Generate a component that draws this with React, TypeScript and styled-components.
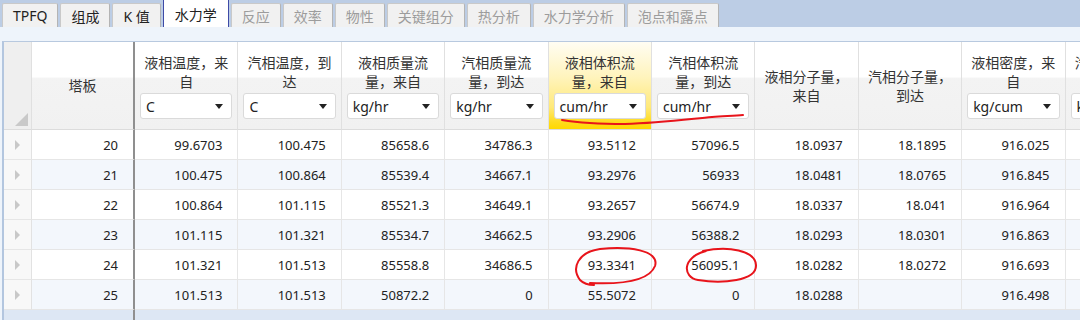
import React from 'react'
import styled, { createGlobalStyle, css } from 'styled-components'

const GlobalStyle = createGlobalStyle`
  body {
    margin: 0;
    background: #eef4fb;
    font-family: "Noto Sans", "Noto Sans CJK SC", sans-serif;
  }
`

const COLS = '28px 103px repeat(10, 103.4px)'

const Page = styled.div`
  position: relative;
  width: 1080px;
  height: 320px;
  overflow: hidden;
  display: flex;
  flex-direction: column;
  background: #eef4fb;
`

const TabBar = styled.div`
  display: flex;
  align-items: flex-end;
  height: 27px;
  padding-left: 2px;
  background: #bccde5;
`

const Tab = styled.div<{ $active?: boolean; $disabled?: boolean }>`
  display: flex;
  align-items: center;
  height: 24px;
  padding: 0 10px;
  margin-right: 2px;
  box-sizing: border-box;
  background: #f1f1f1;
  border: 1px solid #c9c9c9;
  border-right-color: #b4b4b4;
  border-bottom: none;
  border-radius: 2px 2px 0 0;
  font-size: 14px;
  color: ${p => (p.$disabled ? '#9c9c9c' : '#222')};
  ${p =>
    p.$active &&
    css`
      height: 27px;
      padding: 0 11px;
      background: #fff;
      border: none;
      border-left: 1px solid #3e4aa6;
      border-right: 1px solid #3e4aa6;
      border-radius: 0;
    `}
`

const Band = styled.div`
  height: 14px;
  background: #eef4fb;
`

const GridWrap = styled.div`
  flex: 1;
  margin-left: 2px;
  border-left: 2px solid #b3c6df;
  border-top: 1px solid #b8c9df;
  background: #dde7f4;
  overflow: hidden;
  display: flex;
  flex-direction: column;
`

const Row = styled.div<{ $alt?: boolean }>`
  display: grid;
  grid-template-columns: ${COLS};
  height: 30px;
  background: ${p => (p.$alt ? '#f3f7fc' : '#fff')};
`

const HeadRow = styled.div`
  display: grid;
  grid-template-columns: ${COLS};
  height: 88px;
`

const Corner = styled.div`
  display: flex;
  align-items: flex-end;
  justify-content: flex-end;
  padding: 0 3px 3px 0;
  background: #efefef;
  border-right: 1px solid #e0e0e0;
  border-bottom: 1px solid #dcdcdc;
  box-sizing: border-box;
`

const CornerMark = styled.div`
  width: 0;
  height: 0;
  border-left: 13px solid transparent;
  border-bottom: 13px solid #c9c9c9;
`

const HeadCell = styled.div<{ $frozen?: boolean; $hot?: boolean; $center?: boolean }>`
  display: flex;
  flex-direction: column;
  align-items: stretch;
  justify-content: ${p => (p.$center ? 'center' : 'flex-start')};
  padding: ${p => (p.$center ? '0 5px' : '11px 5px 0')};
  box-sizing: border-box;
  min-width: 0;
  background: linear-gradient(#ffffff 0%, #ffffff 40%, #f3f3f3 42%, #f1f1f1 100%);
  border-right: 1px solid #e0e0e0;
  border-bottom: 1px solid #dcdcdc;
  font-size: 14px;
  line-height: 19px;
  color: #333;
  text-align: center;
  ${p =>
    p.$frozen &&
    css`
      border-right: 2px solid #8f8f8f;
    `}
  ${p =>
    p.$hot &&
    css`
      background: linear-gradient(#fffdf3 0%, #fff4bd 40%, #ffe97a 75%, #ffdc1e 92%, #ffd800 100%);
    `}
`

const HeadText = styled.div`
  height: 38px;
`

const UnitBox = styled.div`
  display: flex;
  align-items: center;
  justify-content: space-between;
  height: 26px;
  margin-top: 2px;
  padding: 0 8px 0 5px;
  box-sizing: border-box;
  background: #fff;
  border: 1px solid #dadada;
  border-radius: 3px;
  font-size: 14px;
  color: #222;
  text-align: left;
`

const Caret = styled.span`
  width: 0;
  height: 0;
  border-left: 4px solid transparent;
  border-right: 4px solid transparent;
  border-top: 5px solid #222;
`

const RowHead = styled.div`
  display: flex;
  align-items: center;
  padding-left: 11px;
  background: #f8f8f8;
  border-right: 1px solid #e2e2e2;
  border-bottom: 1px solid #e6e6e6;
  box-sizing: border-box;
`

const RowMark = styled.div`
  width: 0;
  height: 0;
  border-top: 5px solid transparent;
  border-bottom: 5px solid transparent;
  border-left: 5px solid #c8c8c8;
`

const Cell = styled.div<{ $frozen?: boolean }>`
  display: flex;
  align-items: center;
  justify-content: flex-end;
  padding-right: 15px;
  box-sizing: border-box;
  min-width: 0;
  white-space: nowrap;
  border-right: ${p => (p.$frozen ? '2px solid #8f8f8f' : '1px solid #e6e6e6')};
  border-bottom: 1px solid #e6e6e6;
  font-size: 13px;
  color: #222;
`

const Footer = styled.div`
  display: grid;
  grid-template-columns: ${COLS};
  flex: 1;
`

const FooterCell = styled.div<{ $frozen?: boolean }>`
  border-right: ${p => (p.$frozen ? '2px solid #8f8f8f' : 'none')};
`

const Ink = styled.svg`
  position: absolute;
  left: 0;
  top: 0;
  pointer-events: none;
`

type Col = { title: string; unit?: string; hot?: boolean }

const columns: Col[] = [
  { title: '液相温度，来自', unit: 'C' },
  { title: '汽相温度，到达', unit: 'C' },
  { title: '液相质量流量，来自', unit: 'kg/hr' },
  { title: '汽相质量流量，到达', unit: 'kg/hr' },
  { title: '液相体积流量，来自', unit: 'cum/hr', hot: true },
  { title: '汽相体积流量，到达', unit: 'cum/hr' },
  { title: '液相分子量，来自' },
  { title: '汽相分子量，到达' },
  { title: '液相密度，来自', unit: 'kg/cum' },
  { title: '汽相密度，到达', unit: 'kg/cum' },
]

const rows: string[][] = [
  ['20', '99.6703', '100.475', '85658.6', '34786.3', '93.5112', '57096.5', '18.0937', '18.1895', '916.025', ''],
  ['21', '100.475', '100.864', '85539.4', '34667.1', '93.2976', '56933', '18.0481', '18.0765', '916.845', ''],
  ['22', '100.864', '101.115', '85521.3', '34649.1', '93.2657', '56674.9', '18.0337', '18.041', '916.964', ''],
  ['23', '101.115', '101.321', '85534.7', '34662.5', '93.2906', '56388.2', '18.0293', '18.0301', '916.863', ''],
  ['24', '101.321', '101.513', '85558.8', '34686.5', '93.3341', '56095.1', '18.0282', '18.0272', '916.693', ''],
  ['25', '101.513', '101.513', '50872.2', '0', '55.5072', '0', '18.0288', '', '916.498', ''],
]

const tabs = [
  { label: 'TPFQ' },
  { label: '组成' },
  { label: 'K 值' },
  { label: '水力学', active: true },
  { label: '反应', disabled: true },
  { label: '效率', disabled: true },
  { label: '物性', disabled: true },
  { label: '关键组分', disabled: true },
  { label: '热分析', disabled: true },
  { label: '水力学分析', disabled: true },
  { label: '泡点和露点', disabled: true },
]

export default function App() {
  return (
    <Page>
      <GlobalStyle />
      <TabBar>
        {tabs.map(t => (
          <Tab key={t.label} $active={t.active} $disabled={t.disabled}>
            {t.label}
          </Tab>
        ))}
      </TabBar>
      <Band />
      <GridWrap>
        <HeadRow>
          <Corner>
            <CornerMark />
          </Corner>
          <HeadCell $frozen $center>
            塔板
          </HeadCell>
          {columns.map(c =>
            c.unit ? (
              <HeadCell key={c.title} $hot={c.hot}>
                <HeadText>{c.title}</HeadText>
                <UnitBox>
                  {c.unit}
                  <Caret />
                </UnitBox>
              </HeadCell>
            ) : (
              <HeadCell key={c.title} $center>
                {c.title}
              </HeadCell>
            )
          )}
        </HeadRow>
        {rows.map((r, i) => (
          <Row key={r[0]} $alt={i % 2 === 1}>
            <RowHead>
              <RowMark />
            </RowHead>
            {r.map((v, j) => (
              <Cell key={j} $frozen={j === 0}>
                {v}
              </Cell>
            ))}
          </Row>
        ))}
        <Footer>
          <FooterCell />
          <FooterCell $frozen />
        </Footer>
      </GridWrap>

      {/* hand-drawn red marks */}
      <Ink width="1080" height="320" viewBox="0 0 1080 320">
        <g fill="none" stroke="#e8141b" strokeWidth="2" strokeLinecap="round">
          <path d="M562 120 C 580 123, 600 124, 625 124 C 660 123, 690 119, 712 117 C 725 116, 735 116, 743 115" />
          <path d="M590 283 C 612 284, 648 284, 655 266 C 660 250, 628 246, 600 249 C 578 252, 571 268, 580 280 C 584 284, 590 285, 594 285" />
          <path d="M703 251 C 728 246, 755 250, 756 265 C 757 281, 722 284, 698 280 C 682 277, 682 257, 706 251" />
        </g>
      </Ink>
    </Page>
  )
}
